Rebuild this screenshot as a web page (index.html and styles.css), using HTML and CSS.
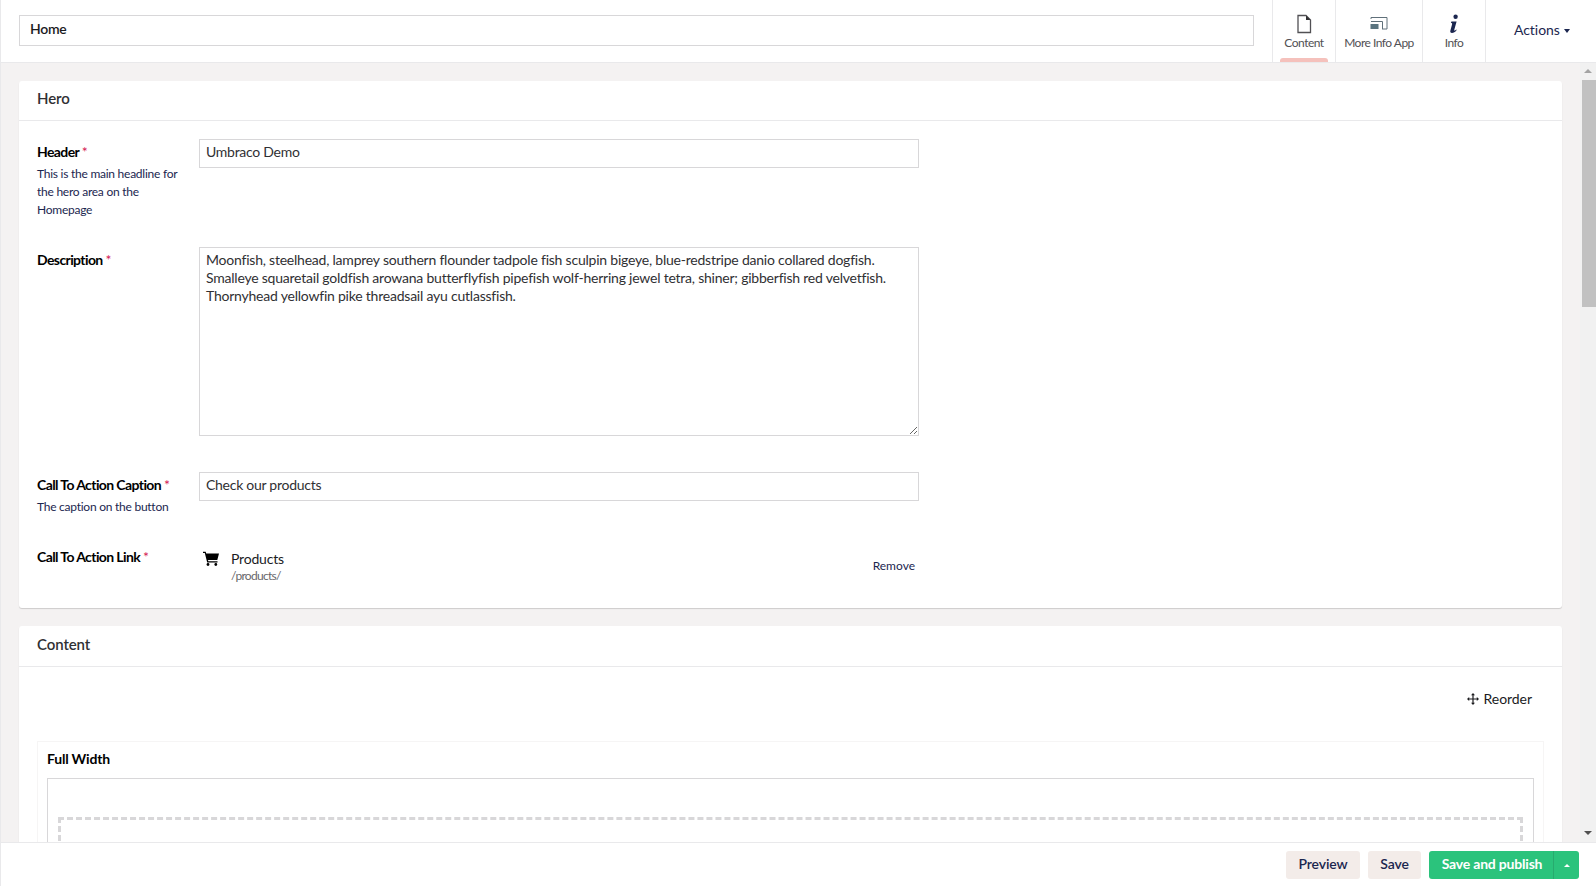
FILE: index.html
```html
<!DOCTYPE html>
<html lang="en">
<head>
<meta charset="utf-8">
<title>Home</title>
<link rel="stylesheet" href="styles.css">
</head>
<body>
<div class="app">
  <header class="topbar">
    <div class="name-wrap"><input class="name-input" type="text" value="Home"></div>
    <nav class="tabs">
      <a class="tab tab-active">
        <svg class="tab-icon" width="20" height="20" viewBox="0 0 20 20"><path d="M4 1.500h8l4.500 4.500v12.500H4z" fill="none" stroke="#515054" stroke-width="1.300"/><path d="M12 1.500l4.500 4.500H12z" fill="#303033"/></svg>
        <span>Content</span>
        <i class="tab-marker"></i>
      </a>
      <a class="tab">
        <svg class="tab-icon" width="20" height="20" viewBox="0 0 20 20"><path d="M2 5V3.500h16v11.500h-5M2 7.500h11.500V15" fill="none" stroke="#60707a" stroke-width="1"/><rect x="1.500" y="10" width="8" height="5" fill="#5b7580"/></svg>
        <span>More Info App</span>
      </a>
      <a class="tab">
        <svg class="tab-icon" width="20" height="20" viewBox="0 0 20 20"><circle cx="11.600" cy="2.800" r="2.200" fill="#1b264f"/><path d="M7.400 7.600h5.200l-2.400 8.400c-.2.800.5.900 2-.6l.5.500c-1.600 2.200-3.200 3-4.700 3-1.600 0-2-1-1.600-2.400l1.700-6.300c.2-.9-.2-1.100-1.200-1.100z" fill="#1b264f"/></svg>
        <span>Info</span>
      </a>
    </nav>
    <div class="actions"><span>Actions</span><i class="caret"></i></div>
  </header>

  <div class="middle">
    <main class="content">
      <section class="panel">
        <h2 class="panel-title">Hero</h2>
        <div class="panel-body">
          <div class="prop prop-header">
            <div class="prop-label">
              <label>Header <em>*</em></label>
              <small>This is the main headline for the hero area on the Homepage</small>
            </div>
            <input class="field" type="text" value="Umbraco Demo">
          </div>
          <div class="prop prop-desc">
            <div class="prop-label"><label>Description <em>*</em></label></div>
            <textarea class="field area">Moonfish, steelhead, lamprey southern flounder tadpole fish sculpin bigeye, blue-redstripe danio collared dogfish. Smalleye squaretail goldfish arowana butterflyfish pipefish wolf-herring jewel tetra, shiner; gibberfish red velvetfish. Thornyhead yellowfin pike threadsail ayu cutlassfish.</textarea>
          </div>
          <div class="prop prop-cta">
            <div class="prop-label">
              <label>Call To Action Caption <em>*</em></label>
              <small>The caption on the button</small>
            </div>
            <input class="field" type="text" value="Check our products">
          </div>
          <div class="prop prop-link">
            <div class="prop-label"><label>Call To Action Link <em>*</em></label></div>
            <div class="picker">
              <svg class="cart" width="16" height="15" viewBox="0 0 16 15"><path d="M0 .8h2.700l.5 1.700H16l-1.700 6.600H5l.3 1.200h9.200v1.200H4.200L1.800 2H0z" fill="#000"/><circle cx="5" cy="13.500" r="1.400" fill="#000"/><circle cx="12.800" cy="13.500" r="1.400" fill="#000"/></svg>
              <div class="picker-text">
                <div class="picker-name">Products</div>
                <div class="picker-path">/products/</div>
              </div>
              <a class="remove">Remove</a>
            </div>
          </div>
        </div>
      </section>

      <section class="panel">
        <h2 class="panel-title panel-title-tall">Content</h2>
        <div class="panel-body grid-body">
          <div class="reorder">
            <svg width="12" height="12" viewBox="0 0 12 12"><path d="M6 0l2 2.200H6.600v3.200h3.200V4L12 6 9.800 8V6.600H6.600v3.200H8L6 12 4 9.800h1.400V6.600H2.200V8L0 6l2.200-2v1.400h3.200V2.200H4z" fill="#1b1b1e"/></svg>
            <span>Reorder</span>
          </div>
          <div class="grid-box">
            <h3 class="grid-title">Full Width</h3>
            <div class="grid-frame"><div class="grid-dashed"></div></div>
          </div>
        </div>
      </section>
    </main>
    <aside class="scrollbar">
      <i class="arrow arrow-up"></i>
      <div class="track"><div class="thumb"></div></div>
      <i class="arrow arrow-down"></i>
    </aside>
  </div>

  <footer class="footer">
    <button class="btn btn-preview">Preview</button>
    <button class="btn btn-save">Save</button>
    <div class="publish">
      <button class="publish-main">Save and publish</button>
      <button class="publish-more"><i></i></button>
    </div>
  </footer>
</div>
</body>
</html>
```

FILE: styles.css
```css
* { box-sizing: border-box; }
html, body { height: 100%; margin: 0; overflow: hidden; }
body {
  font-family: Lato, "Noto Sans", sans-serif;
  font-size: 14px;
  line-height: 20px;
  color: #1b264f;
  background: #fff;
}
.app {
  width: 1596px;
  height: 886px;
  display: flex;
  flex-direction: column;
  border-left: 1px solid #e9e9eb;
}

/* top bar */
.topbar {
  height: 63px;
  flex: none;
  display: flex;
  background: #fff;
  border-bottom: 1px solid #e9e9eb;
}
.name-wrap { flex: 1; padding: 15px 18px 0 18px; }
.name-input {
  width: 100%;
  height: 31px;
  border: 1px solid #d8d7d9;
  padding: 0 10px 4px;
  font: 600 14px Lato, sans-serif;
  letter-spacing: -.3px;
  color: #1b1b1e;
  outline: 0;
  background: #fff;
}
.tabs { display: flex; height: 62px; }
.tab {
  position: relative;
  display: flex;
  flex-direction: column;
  align-items: center;
  padding-top: 14px;
  border-left: 1px solid #e9e9eb;
  font-size: 12px;
  line-height: 16px;
  letter-spacing: -.5px;
  color: #515054;
}
.tab:nth-child(1) { width: 63px; }
.tab:nth-child(2) { width: 87px; }
.tab:nth-child(3) { width: 64px; border-right: 1px solid #e9e9eb; }
.tab-icon { display: block; margin-bottom: 1px; }
.tab-marker {
  position: absolute;
  left: 7px;
  right: 7px;
  bottom: 0;
  height: 4px;
  background: #f5c1bc;
  border-radius: 3px 3px 0 0;
}
.actions {
  width: 110px;
  flex: none;
  display: flex;
  align-items: center;
  padding: 0 0 3px 28px;
  color: #1b264f;
  font-size: 14px;
  letter-spacing: -.05px;
}
.caret {
  margin-left: 4px;
  margin-top: 2px;
  border: 3.500px solid transparent;
  border-top: 4px solid #1b264f;
  border-bottom: 0;
}

/* middle */
.middle { flex: 1; min-height: 0; display: flex; background: #f4f2f2; }
.content {
  flex: 1;
  min-width: 0;
  overflow: hidden;
  padding: 18px 18px 0 18px;
}
.panel {
  background: #fff;
  border-radius: 3px;
  box-shadow: 0 1px 1px rgba(0, 0, 0, .16);
  margin-bottom: 18px;
}
.panel-title {
  margin: 0;
  height: 40px;
  padding: 0 18px;
  border-bottom: 1px solid #e9e9eb;
  font-size: 15px;
  font-weight: 600;
  letter-spacing: -.1px;
  line-height: 35px;
  color: #303033;
}
.panel-title-tall { height: 41px; line-height: 36px; }
.panel-body { padding: 18px 18px 0; }
.prop { display: flex; }
.prop-label { width: 162px; flex: none; padding-right: 14px; }
.prop-label label {
  display: block;
  font-size: 14px;
  font-weight: 700;
  line-height: 20px;
  margin-top: 3px;
  color: #000;
  letter-spacing: -.6px;
  white-space: nowrap;
}
.prop-label em { color: #d42054; font-style: normal; font-weight: 400; }
.prop-label small {
  display: block;
  margin-top: 3px;
  font-size: 12px;
  line-height: 18px;
  letter-spacing: -.25px;
  color: #1b264f;
}
.prop-header { height: 108px; }
.prop-desc { height: 225px; }
.prop-cta { height: 72px; }
.prop-link { height: 64px; }
.field {
  width: 720px;
  height: 29px;
  border: 1px solid #d8d7d9;
  padding: 0 6px 5px;
  font: 400 14px/18px Lato, sans-serif;
  letter-spacing: -.27px;
  color: #303033;
  outline: 0;
  background: #fff;
  border-radius: 0;
}
.area {
  height: 189px;
  padding: 3px 6px;
  letter-spacing: -.22px;
  resize: vertical;
  display: block;
}
.picker {
  width: 720px;
  display: flex;
  align-items: flex-start;
  padding-left: 4px;
  padding-top: 6px;
}
.cart { margin-top: 1px; flex: none; }
.picker-text { margin-left: 12px; flex: 1; }
.picker-name { font-size: 14px; line-height: 18px; letter-spacing: -.2px; color: #1b1b1e; }
.picker-path { font-size: 12px; line-height: 15px; letter-spacing: -.7px; color: #68676b; }
.remove { font-size: 12px; line-height: 16px; margin: 8px 4px 0 0; color: #1b264f; }

/* grid */
.grid-body { padding-top: 0; }
.reorder {
  height: 74px;
  display: flex;
  align-items: flex-end;
  justify-content: flex-end;
  gap: 5px;
  padding: 0 12px 32px 0;
  font-size: 14px;
  letter-spacing: -.05px;
  color: #1b1b1e;
  line-height: 20px;
}
.reorder svg { margin-bottom: 4px; }
.grid-box {
  border: 1px solid #f6f5f5;
  padding: 0 9px;
  height: 120px;
}
.grid-title {
  margin: 0;
  font-size: 14px;
  font-weight: 700;
  letter-spacing: -.2px;
  line-height: 34px;
  padding-bottom: 2px;
  height: 36px;
  color: #000;
}
.grid-frame {
  border: 1px solid #d8d7d9;
  height: 100px;
  padding: 38px 10px 0;
}
.grid-dashed {
  border: 3px dashed #d8d7d9;
  height: 60px;
}

/* scrollbar */
.scrollbar {
  width: 16px;
  flex: none;
  display: flex;
  flex-direction: column;
  background: #f1f1f1;
}
.arrow { display: block; height: 17px; position: relative; flex: none; }
.arrow::after {
  content: "";
  position: absolute;
  left: 4px;
  border: 4px solid transparent;
}
.arrow-up::after { top: 6px; border-bottom: 4px solid #a3a3a3; border-top: 0; }
.arrow-down::after { top: 6px; border-top: 4px solid #505050; border-bottom: 0; }
.track { flex: 1; padding-left: 2px; }
.thumb { height: 227px; background: #c1c1c1; }

/* footer */
.footer {
  height: 44px;
  flex: none;
  display: flex;
  justify-content: flex-end;
  align-items: flex-start;
  gap: 8px;
  padding: 8px 17px 0 0;
  background: #fff;
  border-top: 1px solid #e9e9eb;
}
.btn {
  height: 28px;
  padding: 0 0 3px;
  border: 0;
  border-radius: 3px;
  background: #f3ece9;
  color: #1b264f;
  font: 600 14px Lato, sans-serif;
  letter-spacing: -.1px;
}
.btn-preview { width: 74px; }
.btn-save { width: 53px; }
.publish { display: flex; height: 28px; }
.publish-main {
  border: 0;
  width: 124px;
  background: #2bc37c;
  color: #fff;
  font: 700 14px Lato, sans-serif;
  letter-spacing: -.2px;
  border-radius: 3px 0 0 3px;
  padding: 0 0 3px 2px;
}
.publish-more {
  border: 0;
  width: 26px;
  background: #2bc37c;
  border-left: 1px solid #27ab6e;
  border-radius: 0 3px 3px 0;
  padding: 0;
  display: flex;
  align-items: center;
  justify-content: center;
}
.publish-more i {
  border: 3.500px solid transparent;
  border-bottom: 3.500px solid #fff;
  border-top: 0;
}
```
